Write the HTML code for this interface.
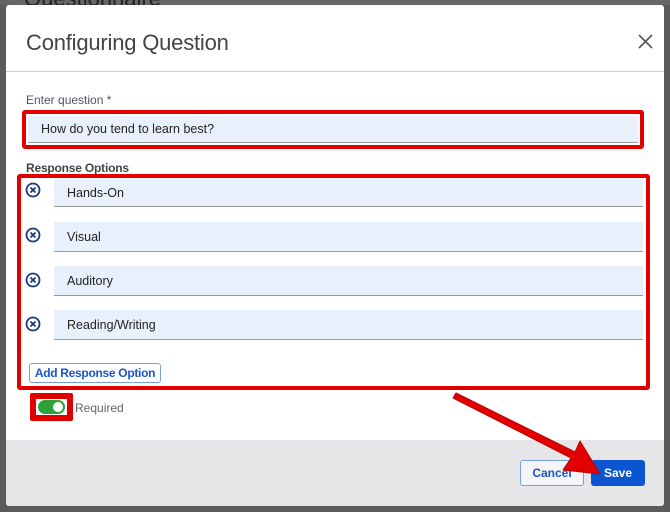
<!DOCTYPE html>
<html><head><style>
*{box-sizing:border-box;margin:0;padding:0}
body{width:670px;height:512px;background:#5b5b5b;font-family:"Liberation Sans",sans-serif;position:relative;overflow:hidden}
.a{position:absolute}
.modal{left:6px;top:5px;width:658px;height:501px;background:#fff;border-radius:3px;overflow:hidden}
.inp{background:#e8f0fc;border-bottom:1px solid #9a9a9a;font-size:12.5px;color:#222;padding-left:13px;display:flex;align-items:center}
.red{border:4px solid #e00000;border-radius:3px}
</style></head><body>
<div class="a" style="left:0;top:0;width:670px;height:5px;background:#666"></div>
<div class="a" style="left:24px;top:-14px;font-size:22px;color:#222">Questionnaire</div>
<div class="a modal">
 <div class="a" style="left:20px;top:25px;font-size:22px;color:#444;letter-spacing:-0.2px">Configuring Question</div>
 <svg class="a" style="left:632px;top:29px" width="15" height="15"><path d="M1 1L14 14M14 1L1 14" stroke="#555" stroke-width="1.6"/></svg>
 <div class="a" style="left:0;top:66px;width:658px;height:1px;background:#ccc"></div>
 <div class="a" style="left:20px;top:88px;font-size:12px;color:#555">Enter question *</div>
 <div class="a" style="left:20px;top:156px;font-size:12px;color:#444;font-weight:bold;letter-spacing:-0.2px">Response Options</div>
 <div class="a" style="left:0;top:435px;width:658px;height:66px;background:#e6e6e8"></div>
</div>
<div class="a red" style="left:22px;top:110px;width:622px;height:39px"></div>
<div class="a inp" style="left:28px;top:116px;width:610px;height:27px">How do you tend to learn best?</div>
<div class="a red" style="left:17px;top:174px;width:633px;height:216px"></div>
<svg class="a" style="left:0;top:0" width="60" height="340">
 <g fill="none" stroke="#1d3b7a" stroke-width="1.8">
  <circle cx="33" cy="190" r="6.5"/><path d="M30.5 187.5l5 5M35.5 187.5l-5 5"/>
  <circle cx="33" cy="235" r="6.5"/><path d="M30.5 232.5l5 5M35.5 232.5l-5 5"/>
  <circle cx="33" cy="280" r="6.5"/><path d="M30.5 277.5l5 5M35.5 277.5l-5 5"/>
  <circle cx="33" cy="324" r="6.5"/><path d="M30.5 321.5l5 5M35.5 321.5l-5 5"/>
 </g>
</svg>
<div class="a inp" style="left:54px;top:179px;width:589px;height:28px">Hands-On</div>
<div class="a inp" style="left:54px;top:222px;width:589px;height:30px">Visual</div>
<div class="a inp" style="left:54px;top:266px;width:589px;height:30px">Auditory</div>
<div class="a inp" style="left:54px;top:310px;width:589px;height:30px">Reading/Writing</div>
<div class="a" style="left:29px;top:363px;width:132px;height:20px;border:1px solid #7a9fe0;border-radius:3px;color:#1a56c8;font-size:12px;font-weight:bold;text-align:center;line-height:18px;letter-spacing:-0.3px">Add Response Option</div>
<div class="a" style="left:30px;top:393px;width:43px;height:28px;background:#e00000;border-radius:2px"></div>
<div class="a" style="left:36px;top:399px;width:31px;height:16px;background:#fff"></div>
<div class="a" style="left:38px;top:400px;width:27px;height:14px;background:#2aa43a;border-radius:7px"></div>
<div class="a" style="left:53px;top:402px;width:10px;height:10px;background:#fff;border-radius:50%"></div>
<div class="a" style="left:75px;top:401px;font-size:12px;color:#666">Required</div>
<div class="a" style="left:520px;top:460px;width:64px;height:26px;border:1px solid #7a9fe0;border-radius:3px;background:#f3f5f9;color:#1a56c8;font-size:12px;font-weight:bold;text-align:center;line-height:24px">Cancel</div>
<div class="a" style="left:591px;top:460px;width:54px;height:26px;background:#0b55d0;border-radius:3px;color:#fff;font-size:12px;font-weight:bold;text-align:center;line-height:26px">Save</div>
<svg class="a" style="left:0;top:0" width="670" height="512"><path d="M453 398 L571 458 L563 470 L600 474 L580 441 L575 452 L456 393 Z" fill="#e00000" stroke="#c00000" stroke-width="1" stroke-linejoin="round"/></svg>
</body></html>
